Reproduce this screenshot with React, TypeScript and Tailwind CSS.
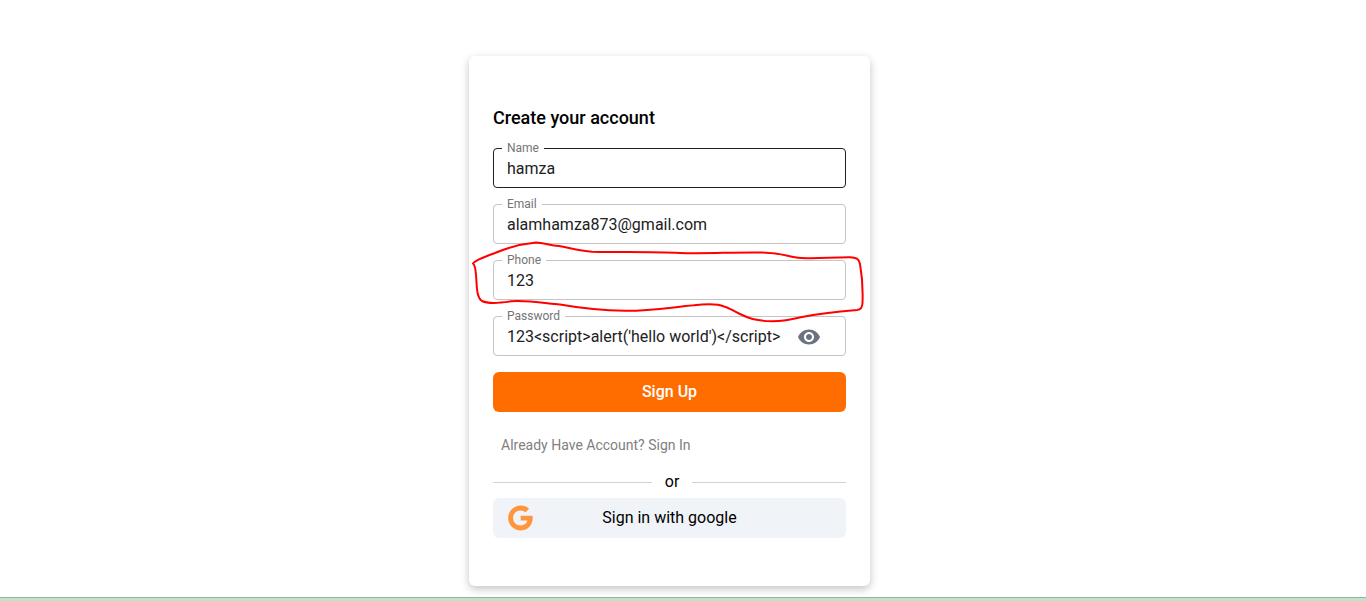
import { useState } from 'react';
import type { ReactNode } from 'react';
import { MdVisibility } from 'react-icons/md';

type FieldProps = {
  id: string;
  label: string;
  type?: string;
  value: string;
  active?: boolean;
  onChange: (value: string) => void;
  children?: ReactNode;
};

function Field({ id, label, type = 'text', value, active, onChange, children }: FieldProps) {
  return (
    <fieldset className={`h-12 min-w-0 rounded border px-2 ${active ? 'border-[#212121]' : 'border-[#c4c4c4]'}`}>
      <legend className="px-[5px] text-xs leading-[17px] text-[#757575]">
        <label htmlFor={id}>{label}</label>
      </legend>
      <div className="flex h-[30px] items-center pb-1.5">
        <input
          id={id}
          type={type}
          value={value}
          onChange={(e) => onChange(e.target.value)}
          className="min-w-0 flex-1 bg-transparent px-[5px] text-base text-[#212121] outline-none"
        />
        {children}
      </div>
    </fieldset>
  );
}

function GoogleIcon() {
  return (
    <svg viewBox="0 0 24 24" className="size-[30px] fill-[#ff963b]" aria-hidden="true">
      <path d="M12.545 10.239v3.821h5.445c-.712 2.315-2.647 3.972-5.445 3.972a6.033 6.033 0 1 1 0-12.064c1.498 0 2.866.549 3.921 1.453l2.814-2.814A9.969 9.969 0 0 0 12.545 2C7.021 2 2.543 6.477 2.543 12s4.478 10 10.002 10c8.396 0 10.249-7.85 9.426-11.748l-9.426-.013z" />
    </svg>
  );
}

// Hand-drawn loop around the phone field
function Scribble() {
  return (
    <svg
      viewBox="469 56 401 530"
      className="pointer-events-none absolute top-0 left-0 h-[530px] w-[401px]"
      fill="none"
      stroke="#ff0000"
      strokeWidth="2"
      strokeLinejoin="round"
      strokeLinecap="round"
      aria-hidden="true"
    >
      <path d="M473 263.5C475 260 484 257 495 253C507 248 520 244 536 242.500C543 243 550 245 559 246C570 248 580 251 592 251.700C620 252.500 650 251.500 680 253C705 254 735 252 760 252.500C780 252.500 785 255.500 795 257.300C810 260 830 257 850 257.200C856 257.400 859 258.500 860 264C862 275 863 290 862.500 303C862 308 861 309.500 857 310C840 311.500 820 313.500 802 317C790 320 784 321.200 772 321.200C755 321 748 318 740 314C733 311 729 307.500 724 306.500C717 303.500 705 304 694 305.300C670 307.500 650 311 625 310.800C600 310.500 580 308 560 304.500C540 302.500 525 300 511 301.300C500 303 488 304 482 301C476 297 477 285 476 275C475.500 268 475 265 473 263.500Z" />
    </svg>
  );
}

export default function App() {
  const [name, setName] = useState('hamza');
  const [email, setEmail] = useState('alamhamza873@gmail.com');
  const [phone, setPhone] = useState('123');
  const [password, setPassword] = useState("123<script>alert('hello world')</script>");
  const [visible, setVisible] = useState(true);

  return (
    <div className="flex min-h-screen flex-col bg-white font-[Roboto,sans-serif] text-black">
      <main className="flex flex-1 items-start justify-center pt-14 pr-[27px] pb-[11px]">
        <div className="relative w-full max-w-[401px] rounded-md bg-white px-6 py-12 shadow-[0_3px_8px_rgba(0,0,0,0.24)]">
          <form className="flex flex-col gap-2" onSubmit={(e) => e.preventDefault()}>
            <h1 className="text-lg leading-7 font-medium">Create your account</h1>
            <Field id="name" label="Name" value={name} onChange={setName} active />
            <Field id="email" label="Email" value={email} onChange={setEmail} />
            <Field id="phone" label="Phone" value={phone} onChange={setPhone} />
            <Field
              id="password"
              label="Password"
              type={visible ? 'text' : 'password'}
              value={password}
              onChange={setPassword}
            >
              <button
                type="button"
                aria-label="Toggle password visibility"
                onClick={() => setVisible(!visible)}
                className="mr-4 text-[#6b7280]"
              >
                <MdVisibility className="size-6" />
              </button>
            </Field>
            <button type="submit" className="mt-2 h-10 rounded-md bg-[#ff6d00] text-base font-medium text-white">
              Sign Up
            </button>
          </form>

          <div className="px-2 pt-6 text-sm leading-[18px] text-[#808080]">
            <a href="#signin">Already Have Account? Sign In</a>
          </div>

          <div className="flex items-center pt-4 pb-1">
            <span className="h-px w-[45%] bg-[#cfd1dc]" />
            <span className="px-[13px] text-base leading-6">or</span>
            <span className="h-px flex-1 bg-[#cfd1dc]" />
          </div>

          <button
            type="button"
            className="grid h-10 w-full grid-cols-[30px_1fr_30px] items-center rounded-md bg-[#f0f4f9] px-3 text-base"
          >
            <GoogleIcon />
            <span>Sign in with google</span>
          </button>

          <Scribble />
        </div>
      </main>
      <footer className="h-1 border-t border-[#93b59b] bg-[#c3e1c6]" />
    </div>
  );
}
